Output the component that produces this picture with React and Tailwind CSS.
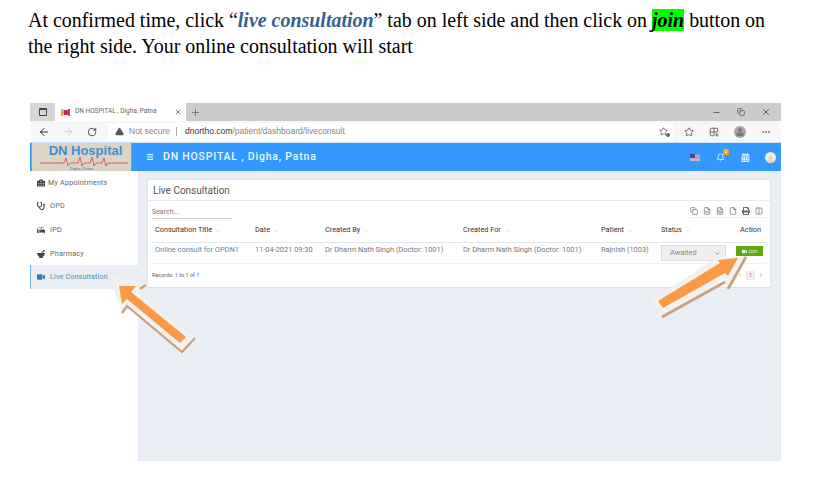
import React from "react";
import {
  ArrowLeft,
  ArrowRight,
  RotateCw,
  TriangleAlert,
  Star,
  Minus,
  X,
  Plus,
  Copy,
  FileSpreadsheet,
  FileText,
  File,
  Columns2,
  Bell,
  Ellipsis,
  ChevronDown,
  ChevronLeft,
  ChevronRight,
  Grid2x2Plus,
  Menu,
} from "lucide-react";
import {
  FaHospitalAlt,
  FaStethoscope,
  FaProcedures,
  FaMortarPestle,
  FaVideo,
  FaPrint,
  FaCalendarAlt,
  FaUser,
} from "react-icons/fa";

const navItems = [
  { label: "My Appointments", icon: FaHospitalAlt, h: "h-[22px]", gap: "ml-[3px]" },
  { label: "OPD", icon: FaStethoscope, h: "h-[24px]", gap: "ml-[5px]" },
  { label: "IPD", icon: FaProcedures, h: "h-[24px]", gap: "ml-[5px]" },
  { label: "Pharmacy", icon: FaMortarPestle, h: "h-[24px]", gap: "ml-[5px]" },
];

const columns = [
  { label: "Consultation Title", w: "w-[100px]" },
  { label: "Date", w: "w-[70px]" },
  { label: "Created By", w: "w-[138px]" },
  { label: "Created For", w: "w-[138px]" },
  { label: "Patient", w: "w-[60px]" },
  { label: "Status", w: "w-[72px]" },
];

function Sort() {
  return <ChevronDown size={6} className="ml-[3px] text-[#c4c8cc]" />;
}

function Browser() {
  return (
    <div>
      <div className="h-[18px] bg-[#cccccc] flex items-center text-[#444]">
        <div className="w-[25px] h-full bg-[#d6d6d6] flex items-center justify-center">
          <div className="w-[8px] h-[8px] rounded-[1px] border border-[#444] border-t-2" />
        </div>
        <div className="w-[131px] h-full bg-white flex items-center pl-[6px] pr-[4px]">
          <svg width="9" height="7" viewBox="0 0 9 7">
            <path d="M0 0h2l1.5 3.5L2 7H0z" fill="#e8a33c" />
            <path d="M9 0H7L5.5 3.5 7 7h2z" fill="#d8336a" />
            <path d="M3 1h3v5H3z" fill="#b52f4d" />
          </svg>
          <span className="ml-[5px] text-[6.5px] text-[#666] font-['Roboto',sans-serif]">
            DN HOSPITAL , Digha, Patna
          </span>
          <X size={8} className="ml-auto text-[#333]" />
        </div>
        <Plus size={11} strokeWidth={1.2} className="ml-[4px]" />
        <div className="ml-auto flex items-center gap-[16px] pr-[10px]">
          <Minus size={9} />
          <Copy size={8} />
          <X size={10} />
        </div>
      </div>
      <div className="h-[21px] bg-[#f7f7f7] flex items-center">
        <div className="flex items-center w-[78px] pl-[8px] gap-[13px] text-[#333]">
          <ArrowLeft size={12} />
          <ArrowRight size={11} className="text-[#ccc]" />
          <RotateCw size={10} />
        </div>
        <div className="w-[565px] h-[18px] bg-white flex items-center pl-[7px] pr-0 font-['Liberation_Sans',sans-serif] text-[8.5px]">
          <TriangleAlert size={9} fill="#555" className="text-[#555]" />
          <span className="ml-[5px] text-[#888]">Not secure</span>
          <span className="ml-[6px] mr-[8px] w-px h-[9px] bg-[#aaa]" />
          <span className="text-[#333]">dnortho.com</span>
          <span className="text-[#888]">/patient/dashboard/liveconsult</span>
          <div className="relative ml-auto mr-[5px]">
            <Star size={9} className="text-[#555]" />
            <span className="absolute -bottom-px -right-[2px] w-[4px] h-[4px] rounded-full bg-[#666]" />
          </div>
        </div>
        <div className="flex-1 flex items-center pl-[11px] gap-[15px] text-[#555]">
          <Star size={10} />
          <Grid2x2Plus size={10} />
          <div className="w-[12px] h-[12px] rounded-full bg-[#a5a5a5] flex items-center justify-center overflow-hidden">
            <FaUser size={8} className="text-[#777]" />
          </div>
          <Ellipsis size={10} />
        </div>
      </div>
    </div>
  );
}

function Topbar() {
  return (
    <div className="h-[29px] bg-[#3399ff] border-t border-[#cfe2f5] flex items-center">
      <div className="relative w-[101px] h-full ml-px bg-[#dbd3c3] border-x border-[#8a9bb0] flex flex-col items-center overflow-hidden">
        <div className="ml-[8px] text-[13px] leading-[15px] font-bold text-[#3f8fd6] font-['Liberation_Sans',sans-serif]">
          DN Hospital
        </div>
        <svg className="-mt-[2px]" width="99" height="11" viewBox="0 0 99 11">
          <path
            d="M8 7h24l2-5 2 8 2-3h8l2-6 2 9 2-3h6l2-6 2 9 2-3h6l2-5 2 8 2-3h20"
            fill="none"
            stroke="#d9434a"
            strokeWidth="0.8"
          />
        </svg>
        <div className="text-[4px] leading-[3px] text-[#3f6fa6] font-['Liberation_Sans',sans-serif]">
          Digha, Patna
        </div>
      </div>
      <Menu size={8} strokeWidth={3} className="ml-[14px] text-white" />
      <div className="ml-[9px] text-[10.5px] font-medium tracking-[0.8px] text-[#eef6ff] font-['Roboto',sans-serif]">
        DN HOSPITAL , Digha, Patna
      </div>
      <div className="ml-auto flex items-center pr-[5px] text-white">
        <svg width="10" height="7" viewBox="0 0 10 7">
          <rect width="10" height="7" fill="#c9b3cf" />
          <rect y="0" width="10" height="1.4" fill="#b08aa8" />
          <rect y="2.8" width="10" height="1.4" fill="#b08aa8" />
          <rect width="5" height="4" fill="#33508f" />
        </svg>
        <div className="relative ml-[16px]">
          <Bell size={9} />
          <span className="absolute -top-[4px] -right-[4px] w-[6px] h-[6px] bg-[#f0a030] text-[4px] leading-[6px] text-center">
            4
          </span>
        </div>
        <FaCalendarAlt size={9} className="ml-[16px] text-[#e8f2ff]" />
        <div className="ml-[15px] w-[11px] h-[11px] rounded-full bg-[#f1ece0] flex items-end justify-center overflow-hidden">
          <FaUser size={7} className="text-[#d9d2c0]" />
        </div>
      </div>
    </div>
  );
}

function Sidebar() {
  return (
    <div className="w-[108px] bg-white font-['Roboto',sans-serif] text-[7.2px] text-[#666]">
      <div className="h-[94px] pt-px">
        {navItems.map((item) => {
          const Icon = item.icon;
          return (
            <div key={item.label} className={`${item.h} flex items-center pl-[7px]`}>
              <Icon size={8} className="text-[#444]" />
              <span className={`${item.gap} tracking-[0.2px]`}>{item.label}</span>
            </div>
          );
        })}
      </div>
      <div className="h-[24px] bg-[#e9edf4] border-l border-[#7db8ea] flex items-center pl-[6px] text-[#4a8fae]">
        <FaVideo size={8} className="text-[#2f7fa8]" />
        <span className="ml-[5px] tracking-[0.15px]">Live Consultation</span>
      </div>
    </div>
  );
}

function Card() {
  return (
    <div className="h-[109px] bg-white border border-[#dde3ea] font-['Roboto',sans-serif]">
      <div className="h-[21px] border-b border-[#e8ebee] pl-[5px] flex items-center text-[10px] text-[#555]">
        Live Consultation
      </div>
      <div className="h-[21px] px-[4px] flex items-start pt-[7px]">
        <div className="w-[80px] h-[11px] border-b border-[#ccc] text-[7px] leading-[9px] text-[#777]">
          Search...
        </div>
        <div className="ml-auto flex items-center gap-[5px] pr-[3px] pb-[2px] -mt-[1px] border-b border-[#eeeeee] text-[#666]">
          <Copy size={8} />
          <FileSpreadsheet size={8} />
          <FileText size={8} />
          <File size={8} />
          <FaPrint size={8} />
          <Columns2 size={8} />
        </div>
      </div>
      <div className="mx-[4px] h-[21px] border-b border-[#e5e8eb] pl-[3px] pb-[3px] flex items-center text-[7.3px] text-[#333]">
        {columns.map((col) => (
          <div key={col.label} className={`${col.w} flex items-center`}>
            {col.label}
            <Sort />
          </div>
        ))}
        <div className="w-[28px] text-right">Action</div>
      </div>
      <div className="mx-[4px] h-[21px] border-b border-[#eef0f2] pl-[3px] flex items-start text-[7.4px] leading-[14px] text-[#777]">
        <div className="w-[100px] text-[#4a8fae]">Online consult for OPDN1</div>
        <div className="w-[70px]">11-04-2021 09:30</div>
        <div className="w-[138px]">Dr Dharm Nath Singh (Doctor: 1001)</div>
        <div className="w-[138px]">Dr Dharm Nath Singh (Doctor: 1001)</div>
        <div className="w-[60px]">Rajnish (1003)</div>
        <div className="w-[72px]">
          <div className="w-[65px] h-[16px] mt-[2px] bg-[#efefef] border border-[#ddd] flex items-center pl-[8px] pr-[4px] text-[#888]">
            Awaited
            <ChevronDown size={7} className="ml-auto text-[#555]" />
          </div>
        </div>
        <div className="w-[28px] flex justify-end">
          <div className="w-[27px] h-[10px] mt-[3px] -mr-[2px] shrink-0 bg-[#5fa810] flex items-center justify-center text-[5px] leading-[10px] text-[#e8f5d8]">
            <FaVideo size={5} className="mr-[1px]" />
            Join
          </div>
        </div>
      </div>
      <div className="mx-[4px] h-[22px] flex items-center text-[5.5px] text-[#666]">
        Records: 1 to 1 of 1
        <div className="ml-auto pr-[2px] flex items-center gap-[3px] text-[#aaa]">
          <ChevronLeft size={6} />
          <span className="w-[9px] h-[9px] bg-[#eee] text-center leading-[9px] text-[#777]">1</span>
          <ChevronRight size={6} className="text-[#666]" />
        </div>
      </div>
    </div>
  );
}

function Arrows() {
  return (
    <svg className="absolute inset-0 pointer-events-none" width="821" height="482" viewBox="0 0 821 482">
      <polygon points="110,277 147,284 139,294 195,338 182,354 132,308 122,314" fill="#f1f1f0" />
      <polyline points="122,313 127,306 182,352 195,338" fill="none" stroke="#c9a17e" strokeWidth="2.2" />
      <line x1="140" y1="289" x2="146" y2="285" stroke="#c9a17e" strokeWidth="2.5" />
      <polygon points="119,286 136,286 131,292 186,337 180,343 127,299 122,304" fill="#fb9a46" />

      <polygon points="652,300 716,258 747,256 728,289 723,280 662,318" fill="#f1f1f0" />
      <line x1="662" y1="317" x2="725" y2="282" stroke="#c9a17e" strokeWidth="2.8" />
      <line x1="728" y1="289" x2="746" y2="257" stroke="#c9a17e" strokeWidth="2.8" />
      <polygon points="658,301 720,263 718,260 738,258 728,276 725,273 663,308" fill="#fb9a46" />
    </svg>
  );
}

export default function App() {
  return (
    <div className="relative w-[821px] h-[482px] bg-white overflow-hidden">
      <div className="pt-[7px] pl-[28px] pr-[30px] font-['Liberation_Serif',serif] text-[19.95px] leading-[26px] text-black whitespace-nowrap">
        <div>
          At confirmed time, click “
          <span className="font-bold italic text-[#365f91]">live consultation</span>” tab on left side
          and then click on{" "}
          <span className="font-bold italic bg-[#00ff00]">join</span> button on
        </div>
        <div>the right side. Your online consultation will start</div>
      </div>
      <div className="mt-[44px] ml-[30px] w-[751px]">
        <Browser />
        <Topbar />
        <div className="flex h-[290px]">
          <Sidebar />
          <div className="flex-1 bg-[#e9edf4] pt-[8px] pl-[9px] pr-[10px]">
            <Card />
          </div>
        </div>
      </div>
      <Arrows />
    </div>
  );
}
